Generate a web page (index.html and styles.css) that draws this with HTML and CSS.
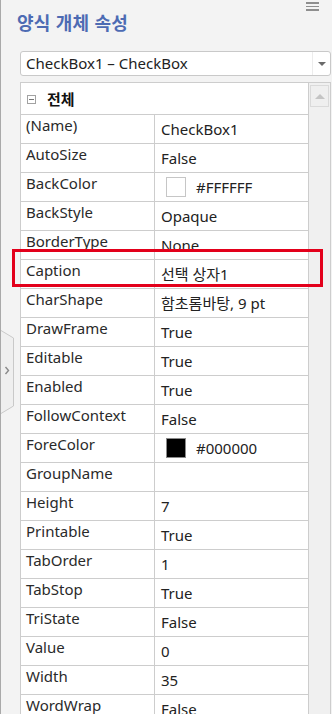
FILE: index.html
```html
<!DOCTYPE html>
<html lang="ko">
<head>
  <meta charset="UTF-8" />
  <meta name="viewport" content="width=device-width, initial-scale=1.0"/>
  <title>양식 개체 속성</title>
  <link rel="stylesheet" href="styles.css">
</head>
<body>
<div class="panel">

  <div class="head">
    <h1>양식 개체 속성</h1>
    <span class="menu"><i></i><i></i><i></i></span>
  </div>

  <div class="picker">
    <span class="picker-text">CheckBox1 – CheckBox</span>
    <span class="picker-btn"><svg width="8" height="4" viewBox="0 0 8 4"><path d="M0 0H8L4 4Z" fill="#6a6a6a"/></svg></span>
  </div>

  <div class="grid">
    <div class="table">
      <div class="group">
        <span class="minus"></span>
        <span class="group-name">전체</span>
      </div>

      <div class="row"><div class="name">(Name)</div><div class="val">CheckBox1</div></div>
      <div class="row"><div class="name">AutoSize</div><div class="val">False</div></div>
      <div class="row"><div class="name">BackColor</div><div class="val"><span class="swatch white"></span>#FFFFFF</div></div>
      <div class="row"><div class="name">BackStyle</div><div class="val">Opaque</div></div>
      <div class="row"><div class="name">BorderType</div><div class="val">None</div></div>
      <div class="row marked"><div class="name">Caption</div><div class="val">선택 상자1</div><span class="mark"></span></div>
      <div class="row"><div class="name">CharShape</div><div class="val">함초롬바탕, 9 pt</div></div>
      <div class="row"><div class="name">DrawFrame</div><div class="val">True</div></div>
      <div class="row"><div class="name">Editable</div><div class="val">True</div></div>
      <div class="row"><div class="name">Enabled</div><div class="val">True</div></div>
      <div class="row"><div class="name">FollowContext</div><div class="val">False</div></div>
      <div class="row"><div class="name">ForeColor</div><div class="val"><span class="swatch black"></span>#000000</div></div>
      <div class="row"><div class="name">GroupName</div><div class="val"></div></div>
      <div class="row"><div class="name">Height</div><div class="val">7</div></div>
      <div class="row"><div class="name">Printable</div><div class="val">True</div></div>
      <div class="row"><div class="name">TabOrder</div><div class="val">1</div></div>
      <div class="row"><div class="name">TabStop</div><div class="val">True</div></div>
      <div class="row"><div class="name">TriState</div><div class="val">False</div></div>
      <div class="row"><div class="name">Value</div><div class="val">0</div></div>
      <div class="row"><div class="name">Width</div><div class="val">35</div></div>
      <div class="row"><div class="name">WordWrap</div><div class="val">False</div></div>
    </div>

    <div class="scroll">
      <span class="scroll-btn"><svg width="10" height="5" viewBox="0 0 10 5"><path d="M0 5H10L5 0Z" fill="#c4c4c4"/></svg></span>
    </div>
  </div>

  <!-- side collapse tab -->
  <svg class="side-tab" width="14" height="84" viewBox="0 0 14 84">
    <path d="M0 0.5L12.5 8V76L0 83.5" fill="#efefef" stroke="#c9c9c9"/>
    <path d="M4.5 37L7.5 40.5L4.5 44" fill="none" stroke="#8a8a8a" stroke-width="1.4"/>
  </svg>

</div>
</body>
</html>
```

FILE: styles.css
```css
body { margin: 0; background: #f3f3f3; font-family: "Noto Sans", "Noto Sans CJK KR", sans-serif; color: #222; }

.panel {
  position: relative; height: 714px; overflow: hidden;
  border-left: 1px solid #a9a9a9; padding: 0 1px 0 19px;
}

.head { display: flex; justify-content: space-between; align-items: flex-start; height: 51px; }
.head h1 {
  margin: 11px 0 0 -3px; font-size: 18px; line-height: 24px; font-weight: 700;
  color: #4d6bb3; letter-spacing: 0.3px;
}
.menu { display: flex; flex-direction: column; gap: 2px; width: 13px; margin: 2px 12px 0 0; }
.menu i { display: block; height: 1.5px; background: #8e8e8e; }

.picker {
  display: flex; height: 23px; background: #fff;
  border: 1px solid #c9c9c9; border-radius: 3px;
}
.picker-text { flex: 1; padding-left: 5px; font-size: 15px; line-height: 23px; }
.picker-btn {
  width: 17px; display: flex; align-items: center; justify-content: center;
  border-left: 1px solid #ececec;
}

.grid {
  display: flex; margin-top: 6px;
  border: 1px solid #cdcdcd; border-bottom: none; background: #f0f0f0;
}
.table { width: 288px; background: #fff; border-right: 1px solid #cdcdcd; }

.group {
  display: flex; align-items: center; height: 31px;
  border-bottom: 1px solid #cdcdcd; background: #fff;
}
.minus {
  position: relative; width: 7px; height: 7px; margin: 1px 0 0 6px;
  border: 1px solid #a2a2a2;
}
.minus::after {
  content: ""; position: absolute; left: 1px; right: 1px; top: 3px; height: 1px; background: #777;
}
.group-name { margin-left: 11px; font-size: 15px; font-weight: 700; color: #111; }

.row {
  position: relative; display: grid; grid-template-columns: 134px 1fr;
  height: 28px; border-bottom: 1px solid #cdcdcd;
}
.name {
  border-right: 1px solid #cdcdcd; padding-left: 5px;
  font-size: 15px; line-height: 20px; color: #2a2a2a;
}
.val {
  display: flex; align-items: center; padding-left: 6px;
  font-size: 15px; line-height: 28px; color: #222;
}
.swatch { width: 18px; height: 18px; margin: 0 10px 0 5px; border: 1px solid #c6c6c6; }
.swatch.white { background: #fff; }
.swatch.black { background: #000; border-color: #8a8a8a; }

.mark {
  position: absolute; left: -9px; top: -11px; width: 305px; height: 32px;
  border: 3px solid #e3001b;
}

.scroll { width: 21px; }
.scroll-btn {
  display: flex; align-items: center; justify-content: center;
  width: 17px; height: 20px; margin: 2px 0 0 1px;
  border: 1px solid #dadada; background: #efefef;
}

.side-tab { position: absolute; left: 0; top: 330px; }
```
